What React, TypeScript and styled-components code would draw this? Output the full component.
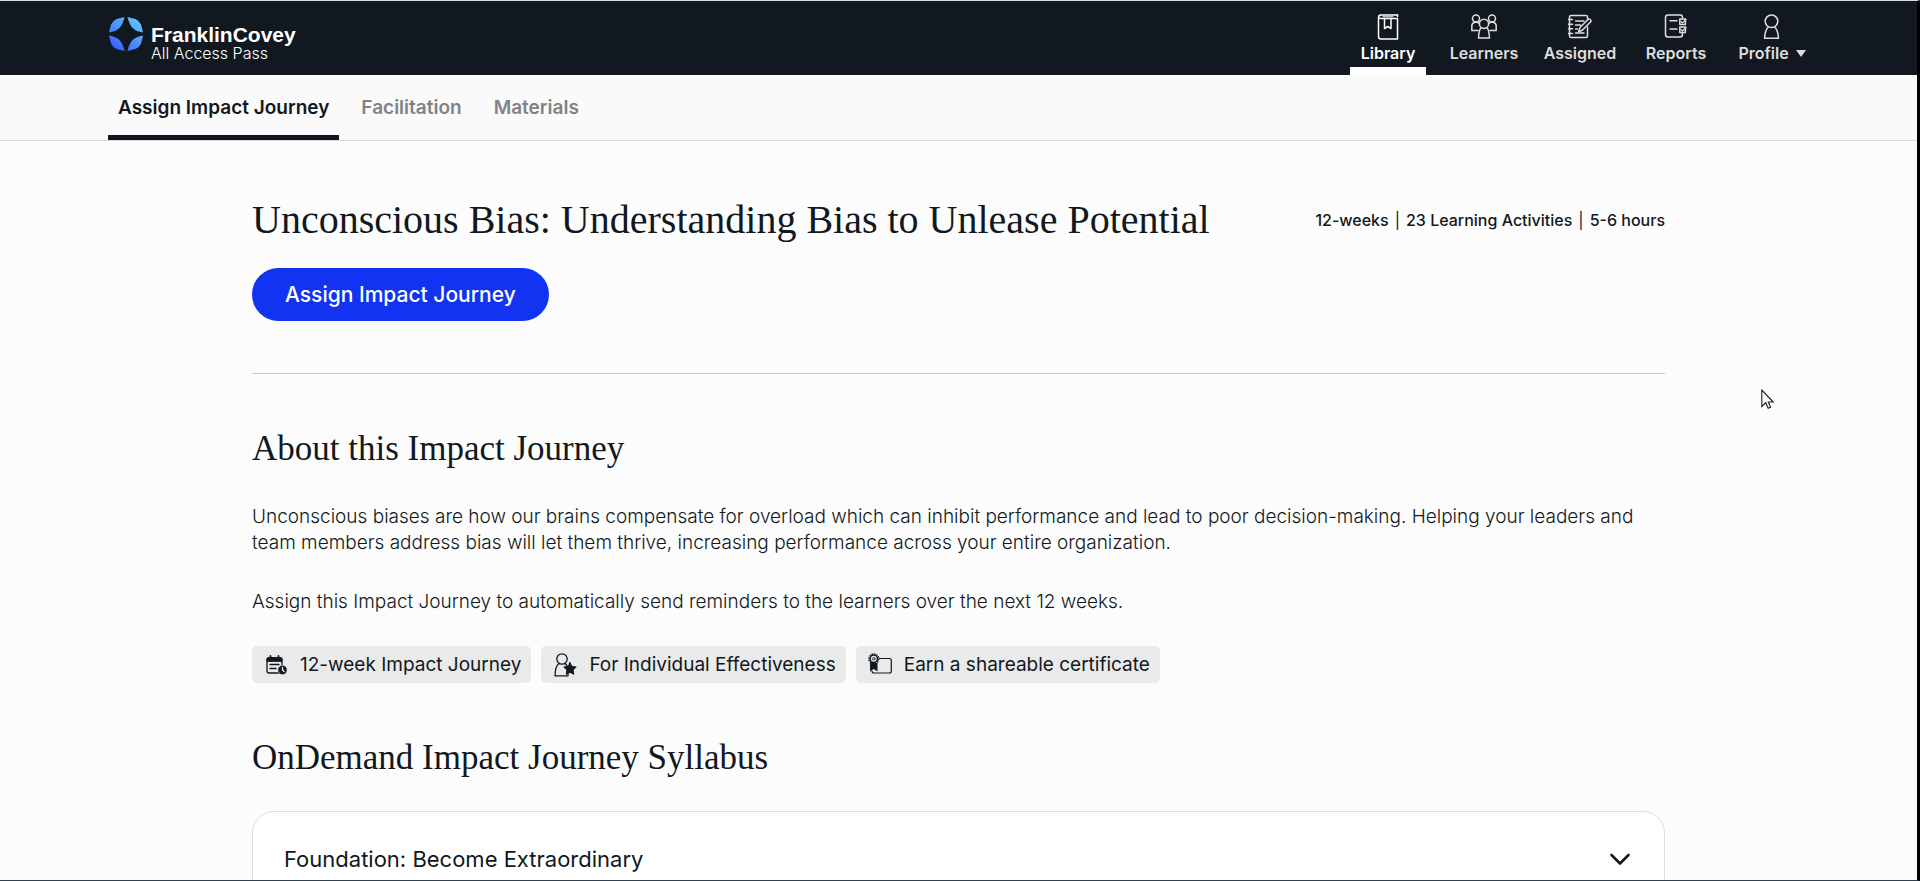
import React from 'react';
import styled, { createGlobalStyle } from 'styled-components';

const ink = '#111820';
const sans = "Inter, 'Liberation Sans', sans-serif";
const serif = "'Liberation Serif', serif";

const GlobalStyle = createGlobalStyle`
  *, *::before, *::after { box-sizing: border-box; }
  html, body { margin: 0; padding: 0; }
  body { background: #fcfcfc; color: ${ink}; font-family: ${sans}; }
  h1, h2, h3, p, ul { margin: 0; padding: 0; }
  button { font: inherit; cursor: pointer; }
`;

const Frame = styled.div`
  height: 100vh;
  overflow-y: auto;
  scrollbar-width: none;
  border-top: 1px solid #d5dfdd;
  border-right: 3px solid #000;
  border-bottom: 1px solid #2f4050;
`;

const Header = styled.header`
  display: flex;
  justify-content: space-between;
  height: 74px;
  padding: 0 107px 0 109px;
  background: ${ink};
`;

const Brand = styled.a`
  display: flex;
  align-items: flex-start;
  gap: 8px;
  padding-top: 16px;
  color: #fff;
  text-decoration: none;
`;

const BrandText = styled.span`
  display: flex;
  flex-direction: column;
  padding-top: 8px;
`;

const BrandName = styled.span`
  font-family: 'Liberation Sans', sans-serif;
  font-size: 21px;
  line-height: 20px;
  font-weight: 700;
`;

const BrandSub = styled.span`
  font-size: 16px;
  line-height: 16px;
  font-weight: 300;
`;

const Nav = styled.nav`
  display: flex;
  gap: 20px;
`;

const NavItem = styled.a<{ $active?: boolean }>`
  display: flex;
  flex-direction: column;
  align-items: center;
  gap: 3px;
  min-width: 76px;
  padding-top: 13px;
  border-bottom: 8px solid ${(p) => (p.$active ? '#fff' : 'transparent')};
  color: ${(p) => (p.$active ? '#fff' : '#dedede')};
  font-size: 16px;
  line-height: 20px;
  font-weight: 600;
  text-decoration: none;
`;

const NavLabel = styled.span`
  display: flex;
  align-items: center;
  gap: 7px;
`;

const Caret = styled.span`
  border: 5px solid transparent;
  border-top: 7px solid #dedede;
  border-bottom: 0;
`;

const Tabs = styled.nav`
  display: flex;
  gap: 12px;
  height: 66px;
  padding-left: 108px;
  border-bottom: 1px solid #dcdcde;
  background: #fafafa;
`;

const Tab = styled.a<{ $active?: boolean }>`
  padding: 21px 10px 0;
  border-bottom: 5px solid ${(p) => (p.$active ? ink : 'transparent')};
  color: ${(p) => (p.$active ? ink : '#808285')};
  font-size: 19px;
  line-height: 24px;
  font-weight: 600;
  text-decoration: none;
`;

const Main = styled.main`
  max-width: 1413px;
  margin: 0 auto;
  padding: 55px 0 56px;
`;

const Hero = styled.section`
  padding-bottom: 52px;
  border-bottom: 1px solid #c8c8ca;
`;

const TitleRow = styled.div`
  display: flex;
  align-items: center;
  justify-content: space-between;
  margin-bottom: 24px;
`;

const Title = styled.h1`
  font-family: ${serif};
  font-size: 40px;
  line-height: 48px;
  font-weight: 400;
`;

const Meta = styled.p`
  display: flex;
  gap: 6px;
  font-size: 16px;
  line-height: 24px;
  font-weight: 500;
`;

const Divider = styled.span`
  font-weight: 400;
`;

const AssignButton = styled.button`
  height: 53px;
  padding: 0 33px;
  border: 0;
  border-radius: 27px;
  background: #1233f2;
  color: #fff;
  font-size: 21px;
  font-weight: 500;
`;

const SectionTitle = styled.h2`
  font-family: ${serif};
  font-size: 35px;
  line-height: 40px;
  font-weight: 400;
`;

const About = styled.section`
  padding: 55px 0;
`;

const Copy = styled.div`
  display: grid;
  gap: 33px;
  margin: 35px 0 31px;
  font-size: 19px;
  line-height: 26px;
  font-weight: 300;
`;

const Tags = styled.ul`
  display: flex;
  flex-wrap: wrap;
  gap: 10px;
  list-style: none;
`;

const Tag = styled.li`
  display: flex;
  align-items: center;
  gap: 12px;
  height: 37px;
  padding: 0 10px 0 12px;
  border-radius: 5px;
  background: #eaeaea;
  font-size: 19px;
  line-height: 24px;
`;

const Panel = styled.section`
  margin-top: 33px;
  border: 1px solid #dedede;
  border-radius: 22px;
  background: #fff;
`;

const PanelToggle = styled.button`
  display: flex;
  align-items: center;
  justify-content: space-between;
  width: 100%;
  padding: 31px;
  border: 0;
  background: none;
  color: ${ink};
  font-size: 22px;
  line-height: 32px;
  text-align: left;
`;

const Pointer = styled.svg`
  position: absolute;
  left: 1761px;
  top: 389px;
`;

const Logo = () => (
  <svg width="34" height="34" viewBox="0 0 34 34" fill="url(#brand)" aria-hidden="true">
    <defs>
      <linearGradient id="brand" gradientUnits="userSpaceOnUse" x1="6" y1="30" x2="28" y2="4">
        <stop offset="0" stopColor="#3b63ff" />
        <stop offset="1" stopColor="#5fc0fb" />
      </linearGradient>
    </defs>
    <path d="M15.500 0L7.500 2Q3.500 4 2 7.500L0 15.500Q7 14.500 10.500 11Q14 7 15.500 0Z" />
    <path d="M18.500 0L26.500 2Q30.500 4 32 7.500L34 15.500Q27 14.500 23.500 11Q20 7 18.500 0Z" />
    <path d="M15.500 34L7.500 32Q3.500 30 2 26.500L0 18.500Q7 19.500 10.500 23Q14 27 15.500 34Z" />
    <path d="M18.500 34L26.500 32Q30.500 30 32 26.500L34 18.500Q27 19.500 23.500 23Q20 27 18.500 34Z" />
  </svg>
);

const NavIcon = ({ children }: { children: React.ReactNode }) => (
  <svg width="26" height="26" viewBox="0 0 26 26" fill="none" stroke="currentColor" strokeWidth="1.500" strokeLinejoin="round" strokeLinecap="round" aria-hidden="true">
    {children}
  </svg>
);

const LibraryIcon = () => (
  <NavIcon>
    <path d="M22.500 1H6Q3.500 1 3.500 3.500V22.500Q3.500 25 6 25H22.500V4.500H6Q3.800 4.300 3.600 3" />
    <path d="M22.500 1V2.500M9.500 4.500V14.500L12.700 12.500L16 14.500V4.500" />
    <path d="M8 2.800H18" strokeWidth="1" />
  </NavIcon>
);

const LearnersIcon = () => (
  <NavIcon>
    <circle cx="5" cy="4.500" r="3.500" />
    <circle cx="21" cy="4.500" r="3.500" />
    <path d="M7 16.500H.8V12Q.8 8.800 4 8.200H6.500L8 9.500M19 16.500H25.200V12Q25.200 8.800 22 8.200H19.500L18 9.500" />
    <circle cx="13" cy="9.800" r="4.600" />
    <path d="M9.800 14Q8 16 7.500 24H18.500Q18 16 16.200 14" />
  </NavIcon>
);

const AssignedIcon = () => (
  <NavIcon>
    <path d="M20.500 5V3Q20.500 1.500 19 1.500H4Q2.500 1.500 2.500 3V22Q2.500 23.500 4 23.500H19Q20.500 23.500 20.500 22V13" />
    <path d="M1.500 5.500H5.500M1.500 10.200H5.500M1.500 14.800H5.500M1.500 19.500H5.500" />
    <path d="M8.500 7H17M8.500 11H13.500M8.500 15H10.500M8.500 19H17" strokeWidth="1.400" />
    <path d="M11.500 18L13 13.500L21.500 5Q23 4.500 24 6.500Q24 7.500 23.500 8L15.500 16Z" />
  </NavIcon>
);

const ReportsIcon = () => (
  <NavIcon>
    <path d="M19.500 4V3.500Q19.500 1 17 1H5Q2.500 1 2.500 3.500V20.500Q2.500 23 5 23H17Q19.500 23 19.500 20.500V19.500" />
    <path d="M7 6.800H14M7 15H14" />
    <rect x="16.800" y="5" width="5.600" height="5.600" />
    <rect x="16.800" y="13" width="5.600" height="5.600" />
    <path d="M18 7.500L19.500 9L23 5.500M18 15.500L19.500 17L23 13.500" strokeWidth="1.200" />
  </NavIcon>
);

const ProfileIcon = () => (
  <NavIcon>
    <circle cx="12.500" cy="7.300" r="6.300" />
    <path d="M9.500 12.800Q6 16 5.500 24.200H19.500Q19 16 15.500 12.800" />
  </NavIcon>
);

const TagIcon = ({ children }: { children: React.ReactNode }) => (
  <svg width="24" height="24" viewBox="0 0 24 24" fill="none" stroke="currentColor" strokeLinejoin="round" strokeLinecap="round" aria-hidden="true">
    {children}
  </svg>
);

const CalendarClockIcon = () => (
  <TagIcon>
    <rect x="3" y="5" width="15" height="15" rx="2" strokeWidth="1.300" />
    <path d="M3 8V6Q3 4.500 4.500 4.500H16.500Q18 4.500 18 6V8Z" fill="currentColor" />
    <path d="M6.500 3V5M14.500 3V5" strokeWidth="1.800" />
    <path d="M6 11.500H15M6 15.500H12" strokeWidth="1.300" />
    <circle cx="18.500" cy="17" r="4.700" fill="currentColor" stroke="#eaeaea" strokeWidth=".6" />
    <path d="M18.500 14.300V17L20 18.500" stroke="#eaeaea" strokeWidth="1.300" />
  </TagIcon>
);

const PersonStarIcon = () => (
  <TagIcon>
    <circle cx="9" cy="6" r="5.200" strokeWidth="1.300" />
    <path d="M6 10.500Q2.300 13 2 22.800H15V20.500M12 10.500L14 12.500" strokeWidth="1.300" />
    <path d="M17 9.500L18.900 13.400L23.200 14L20.100 17L20.800 21.300L17 19.300L13.200 21.300L13.900 17L10.800 14L15.100 13.400Z" fill="currentColor" />
  </TagIcon>
);

const CertificateIcon = () => (
  <TagIcon>
    <path d="M11.500 5.500H21.500Q23.300 5.500 23.300 7.500V18Q23.300 20 21.500 20H6Q4 20 4 18" strokeWidth="1.200" />
    <path d="M2 10H9.500V18.500L5.800 16L2 18.500Z" fill="currentColor" stroke="none" />
    <circle cx="5.800" cy="5.800" r="4.900" strokeWidth="1.400" strokeDasharray="1.500 1" strokeLinecap="butt" />
    <circle cx="5.800" cy="5.800" r="3.700" strokeWidth="1.500" fill="#eaeaea" />
    <circle cx="5.800" cy="5.800" r="1.300" strokeWidth=".8" />
  </TagIcon>
);

const navItems = [
  { label: 'Library', Icon: LibraryIcon, active: true },
  { label: 'Learners', Icon: LearnersIcon },
  { label: 'Assigned', Icon: AssignedIcon },
  { label: 'Reports', Icon: ReportsIcon },
  { label: 'Profile', Icon: ProfileIcon, menu: true },
];

const tags = [
  { label: '12-week Impact Journey', Icon: CalendarClockIcon },
  { label: 'For Individual Effectiveness', Icon: PersonStarIcon },
  { label: 'Earn a shareable certificate', Icon: CertificateIcon },
];

export default function App() {
  return (
    <Frame>
      <GlobalStyle />
      <Header>
        <Brand href="#">
          <Logo />
          <BrandText>
            <BrandName>FranklinCovey</BrandName>
            <BrandSub>All Access Pass</BrandSub>
          </BrandText>
        </Brand>
        <Nav>
          {navItems.map(({ label, Icon, active, menu }) => (
            <NavItem key={label} href="#" $active={active}>
              <Icon />
              <NavLabel>
                {label}
                {menu && <Caret />}
              </NavLabel>
            </NavItem>
          ))}
        </Nav>
      </Header>
      <Tabs>
        <Tab href="#" $active>Assign Impact Journey</Tab>
        <Tab href="#">Facilitation</Tab>
        <Tab href="#">Materials</Tab>
      </Tabs>
      <Main>
        <Hero>
          <TitleRow>
            <Title>Unconscious Bias: Understanding Bias to Unlease Potential</Title>
            <Meta>
              <span>12-weeks</span>
              <Divider>|</Divider>
              <span>23 Learning Activities</span>
              <Divider>|</Divider>
              <span>5-6 hours</span>
            </Meta>
          </TitleRow>
          <AssignButton type="button">Assign Impact Journey</AssignButton>
        </Hero>
        <About>
          <SectionTitle>About this Impact Journey</SectionTitle>
          <Copy>
            <p>
              Unconscious biases are how our brains compensate for overload which can inhibit performance and lead to
              poor decision-making. Helping your leaders and team members address bias will let them thrive, increasing
              performance across your entire organization.
            </p>
            <p>Assign this Impact Journey to automatically send reminders to the learners over the next 12 weeks.</p>
          </Copy>
          <Tags>
            {tags.map(({ label, Icon }) => (
              <Tag key={label}>
                <Icon />
                {label}
              </Tag>
            ))}
          </Tags>
        </About>
        <SectionTitle>OnDemand Impact Journey Syllabus</SectionTitle>
        <Panel>
          <PanelToggle type="button" aria-expanded="false">
            Foundation: Become Extraordinary
            <svg width="26" height="20" viewBox="0 0 26 20" fill="none" stroke="currentColor" strokeWidth="2.600" strokeLinecap="round" strokeLinejoin="round" aria-hidden="true">
              <path d="M4.500 6L13 14.500L21.500 6" />
            </svg>
          </PanelToggle>
        </Panel>
      </Main>
      <Pointer width="14" height="21" viewBox="0 0 14 21" aria-hidden="true">
        <path d="M.8 1V17.500L4.800 13.800L7.200 19.300L9.600 18.300L7.300 13H12.200Z" fill="#fff" stroke="#1b1b24" strokeWidth="1.100" />
      </Pointer>
    </Frame>
  );
}
